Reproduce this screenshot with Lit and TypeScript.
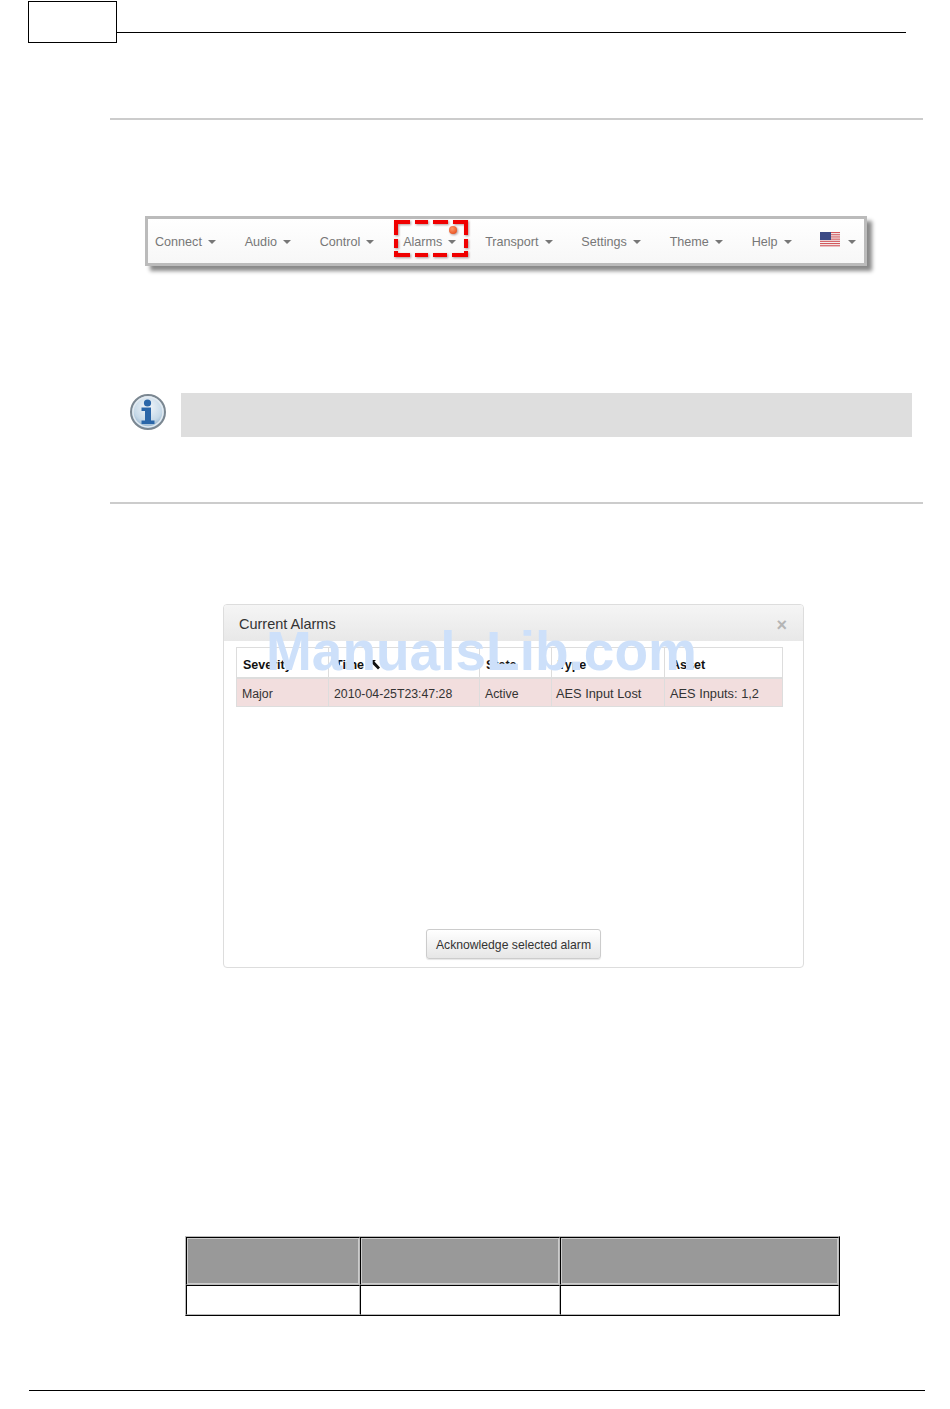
import { LitElement, html, css, svg } from "lit";
import { customElement } from "lit/decorators.js";

const caret = html`<i class="caret"></i>`;

const stripes = [0, 1, 2, 3, 4, 5, 6];
const flag = html`<svg class="flag" width="20" height="15" viewBox="0 0 20 15">
  <rect width="20" height="15" fill="#f4f1f1"></rect>
  ${stripes.map((i) => svg`<rect y=${i * 2.2} width="20" height="1.1" fill="#d3585c"></rect>`)}
  <rect width="11" height="8" fill="#3b4a85"></rect>
</svg>`;

const infoIcon = html`<svg class="info" width="38" height="38" viewBox="0 0 38 38">
  <defs>
    <radialGradient id="disc" cx="50%" cy="35%" r="65%">
      <stop offset="0" stop-color="#f2f6fa"></stop>
      <stop offset="0.65" stop-color="#c6d9e8"></stop>
      <stop offset="1" stop-color="#86a9c6"></stop>
    </radialGradient>
  </defs>
  <circle cx="19" cy="19" r="17" fill="url(#disc)" stroke="#7b8791" stroke-width="2"></circle>
  <circle cx="19" cy="19" r="15" fill="none" stroke="#e4ebf1" stroke-width="1.4"></circle>
  <circle cx="18.5" cy="10" r="3.6" fill="#2a66a8"></circle>
  <path d="M12.5 14.5h9.5v13h3.5v3.6H12.5v-3.6h3.5v-9.4h-3.5z" fill="#2a66a8"></path>
</svg>`;

const NAV = ["Connect", "Audio", "Control", "Alarms", "Transport", "Settings", "Theme", "Help"];

@customElement("app-root")
export class AppRoot extends LitElement {
  static styles = css`
    :host {
      display: block;
      position: relative;
      height: 1409px;
      background: #fff;
      font-family: "Liberation Sans", Arial, sans-serif;
      overflow: hidden;
    }
    .head {
      display: flex;
      margin: 1px 44px 0 28px;
    }
    .head .tab {
      width: 87px;
      height: 40px;
      border: 1px solid #000;
      flex: none;
    }
    .head .line {
      flex: 1;
      height: 1px;
      background: #000;
      margin-top: 31px;
    }
    .rule {
      height: 2px;
      background: #ccc;
      margin-left: 110px;
      margin-right: 27px;
    }
    .rule.first {
      margin-top: 75px;
    }
    .nav {
      position: relative;
      display: flex;
      align-items: center;
      box-sizing: border-box;
      width: 722px;
      height: 50px;
      margin: 96px 0 0 145px;
      padding: 2px 0 0 7px;
      border: 3px solid #bbb;
      background: linear-gradient(#fff, #f7f7f7);
      box-shadow: 5px 5px 4px #8a8a8a;
      color: #777;
      font-size: 12.6px;
    }
    .nav .item {
      display: flex;
      align-items: center;
      gap: 6px;
      margin-right: 28.8px;
    }
    .nav .flag {
      margin-right: 8px;
      margin-top: -5px;
    }
    .caret {
      display: block;
      width: 0;
      height: 0;
      border-left: 4px solid transparent;
      border-right: 4px solid transparent;
      border-top: 4px solid #777;
    }
    .callout {
      position: absolute;
      left: 246px;
      top: 1px;
      pointer-events: none;
      filter: drop-shadow(1px 1px 1px rgba(60, 0, 0, 0.4));
    }
    .note {
      display: flex;
      align-items: flex-start;
      gap: 14px;
      margin: 127px 38px 0 129px;
    }
    .note .bar {
      flex: 1;
      height: 44px;
      background: #dedede;
    }
    .rule.second {
      margin-top: 65px;
    }
    .panel {
      box-sizing: border-box;
      width: 581px;
      height: 364px;
      margin: 100px 0 0 223px;
      border: 1px solid #ddd;
      border-radius: 4px;
      display: flex;
      flex-direction: column;
      overflow: hidden;
    }
    .panel header {
      flex: none;
      box-sizing: border-box;
      height: 36px;
      display: flex;
      align-items: center;
      justify-content: space-between;
      padding: 2px 15px 0;
      background: linear-gradient(#f5f5f5, #e8e8e8);
      color: #333;
      font-size: 14.5px;
    }
    .panel .close {
      color: #b5b5b5;
      font-size: 18px;
      font-weight: bold;
      margin-right: 1px;
      margin-top: 3px;
    }
    .panel .body {
      flex: 1;
      display: flex;
      flex-direction: column;
      padding: 6px 20px 8px 12px;
    }
    table.alarms {
      width: 546px;
      table-layout: fixed;
      border-collapse: collapse;
      font-size: 12.3px;
      color: #333;
    }
    table.alarms th,
    table.alarms td {
      border: 1px solid #ddd;
      padding: 0 5px;
      text-align: left;
      white-space: nowrap;
    }
    table.alarms th {
      box-sizing: border-box;
      height: 30px;
      border-bottom-width: 2px;
      color: #111;
      font-size: 12.5px;
      padding: 5px 0 0 6px;
    }
    table.alarms td {
      box-sizing: border-box;
      height: 29px;
      padding-top: 3px;
      background: #f2dede;
    }
    table.alarms td.wide {
      font-size: 12.8px;
    }
    table.alarms td.tight {
      padding-left: 4px;
    }
    .sort {
      margin-left: 6px;
      vertical-align: -1px;
    }
    .actions {
      margin-top: auto;
      display: flex;
      justify-content: center;
      padding-left: 8px;
    }
    button {
      box-sizing: border-box;
      width: 175px;
      height: 30px;
      padding: 2px 0 0;
      border: 1px solid #ccc;
      border-radius: 3px;
      background: linear-gradient(#fff, #e6e6e6);
      color: #333;
      font: 12.2px "Liberation Sans", Arial, sans-serif;
      box-shadow: 0 1px 1px rgba(0, 0, 0, 0.1);
    }
    table.plain {
      box-sizing: border-box;
      width: 655px;
      height: 80px;
      margin: 268px 0 0 185px;
      border-collapse: separate;
      border-spacing: 0;
      table-layout: fixed;
      border: 1px solid;
      border-color: #bbb #000 #000 #bbb;
    }
    table.plain th,
    table.plain td {
      padding: 0;
      border: 1px solid;
      border-color: #000 #bbb #bbb #000;
    }
    table.plain th {
      height: 46px;
      background: #999;
      box-shadow: inset 0 0 0 1px #ccc;
    }
    .foot {
      height: 1px;
      background: #000;
      margin: 74px 25px 0 29px;
    }
    .mark {
      position: absolute;
      left: 266px;
      top: 620px;
      font-size: 55px;
      font-weight: bold;
      line-height: 62px;
      color: #cde0fa;
      white-space: nowrap;
      pointer-events: none;
    }
  `;

  render() {
    return html`
      <div class="head"><div class="tab"></div><div class="line"></div></div>
      <div class="rule first"></div>
      <nav class="nav">
        ${NAV.map((n) => html`<span class="item">${n}${caret}</span>`)}
        ${flag}${caret}
        <svg class="callout" width="76" height="40" viewBox="0 0 76 40">
          <defs>
            <radialGradient id="dot" cx="40%" cy="35%" r="70%">
              <stop offset="0" stop-color="#ff9a6a"></stop>
              <stop offset="1" stop-color="#e8501e"></stop>
            </radialGradient>
          </defs>
          <path
            d="M2 15V2H16M21 2H34M39 2H54M59 2H72V15M72 19V28M72 31V35H58M53 35H39M34 35H21M16 35H2V31M2 28V19"
            fill="none"
            stroke="#f00000"
            stroke-width="4"
          ></path>
          <circle cx="59" cy="10" r="4" fill="url(#dot)"></circle>
        </svg>
      </nav>
      <div class="note">${infoIcon}<div class="bar"></div></div>
      <div class="rule second"></div>
      <section class="panel">
        <header><span>Current Alarms</span><span class="close">×</span></header>
        <div class="body">
          <table class="alarms">
            <colgroup>
              <col style="width:92px" /><col style="width:151px" /><col style="width:72px" /><col style="width:113px" /><col style="width:118px" />
            </colgroup>
            <thead>
              <tr>
                <th>Severity</th>
                <th>Time<svg class="sort" width="10" height="10" viewBox="0 0 10 10"><path d="M0 0h6L4.4 1.6 10 7.5 8 9.6 2.3 3.7 0 6z" fill="#111"></path></svg></th>
                <th>State</th>
                <th>Type</th>
                <th>Asset</th>
              </tr>
            </thead>
            <tbody>
              <tr>
                <td>Major</td>
                <td>2010-04-25T23:47:28</td>
                <td>Active</td>
                <td class="wide tight">AES Input Lost</td>
                <td class="wide">AES Inputs: 1,2</td>
              </tr>
            </tbody>
          </table>
          <div class="actions"><button>Acknowledge selected alarm</button></div>
        </div>
      </section>
      <table class="plain">
        <colgroup><col style="width:174px" /><col style="width:200px" /><col /></colgroup>
        <tr><th></th><th></th><th></th></tr>
        <tr><td></td><td></td><td></td></tr>
      </table>
      <div class="foot"></div>
      <div class="mark">ManualsLib.com</div>
    `;
  }
}
